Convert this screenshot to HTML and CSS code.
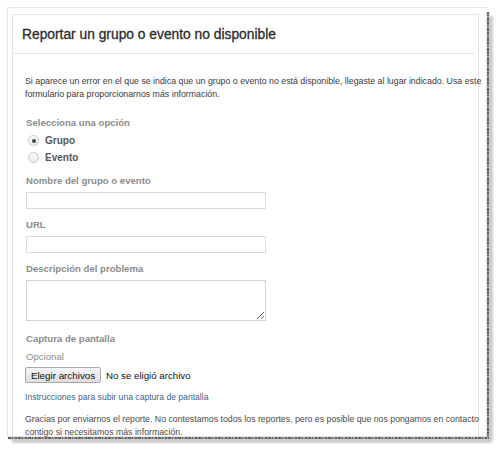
FILE: index.html
```html
<!DOCTYPE html>
<html lang="es">
<head>
<meta charset="utf-8">
<title>Reportar un grupo o evento no disponible</title>
<link rel="stylesheet" href="styles.css">
</head>
<body>
<div class="frame">
  <div class="page">
    <div class="dialog">
      <div class="header">
        <h1 class="title">Reportar un grupo o evento no disponible</h1>
      </div>
      <div class="content">
        <p class="intro">Si aparece un error en el que se indica que un grupo o evento no está disponible, llegaste al lugar indicado. Usa este<br>formulario para proporcionarnos más información.</p>

        <div class="label label-first">Selecciona una opción</div>
        <div class="radio-row"><span class="radio checked"></span><span class="radio-text">Grupo</span></div>
        <div class="radio-row"><span class="radio"></span><span class="radio-text">Evento</span></div>

        <div class="label label-after-radio">Nombre del grupo o evento</div>
        <input class="text-input" type="text">

        <div class="label">URL</div>
        <input class="text-input" type="text">

        <div class="label">Descripción del problema</div>
        <textarea class="text-area"></textarea>

        <div class="label label-after-area">Captura de pantalla</div>
        <div class="label optional">Opcional</div>
        <div class="file-row">
          <button class="file-btn" type="button">Elegir archivos</button>
          <span class="file-status">No se eligió archivo</span>
        </div>

        <a class="help-link" href="#">Instrucciones para subir una captura de pantalla</a>

        <p class="thanks">Gracias por enviarnos el reporte. No contestamos todos los reportes, pero es posible que nos pongamos en contacto<br>contigo si necesitamos más información.</p>
      </div>
    </div>
  </div>
</div>

<svg class="torn" width="500" height="450" viewBox="0 0 500 450" aria-hidden="true">
  <defs>
    <filter id="blur" x="-10%" y="-10%" width="120%" height="120%">
      <feGaussianBlur stdDeviation="1.2"/>
    </filter>
  </defs>
  <g filter="url(#blur)" stroke="#bdbdbd" stroke-width="3" fill="none">
    <line x1="491" y1="16" x2="491" y2="441"/>
    <line x1="12" y1="441" x2="491" y2="441"/>
  </g>
  <line x1="488" y1="12" x2="488" y2="438" stroke="#a0a0a0" stroke-width="2.6"/>
  <line x1="488" y1="12" x2="488" y2="438" stroke="#505050" stroke-width="1.6" stroke-dasharray="2 1 1 2 3 1"/>
  <line x1="8" y1="438" x2="489" y2="438" stroke="#a0a0a0" stroke-width="2.6"/>
  <line x1="8" y1="438" x2="489" y2="438" stroke="#505050" stroke-width="1.6" stroke-dasharray="3 1 1 2 2 1"/>
</svg>
</body>
</html>
```

FILE: styles.css
```css
* { box-sizing: border-box; }

html, body {
  margin: 0;
  padding: 0;
  background: #ffffff;
}

body {
  font-family: "Liberation Sans", Arial, sans-serif;
  width: 500px;
  height: 450px;
  overflow: hidden;
  position: relative;
}

.frame {
  width: 488px;
  height: 437px;
  overflow: hidden;
  background: #ffffff;
}

.page {
  margin: 7px 0 0 7px;
  border-top: 1px solid #e6e6e6;
  border-left: 1px solid #e6e6e6;
  padding: 6px 0 0 4px;
  height: 460px;
}

.dialog {
  width: 467px;
  border: 1px solid #e4e4e4;
  border-bottom: none;
  height: 460px;
}

.header {
  height: 39px;
  border-bottom: 1px solid #e4e4e4;
  margin-right: 4px;
  display: flex;
  align-items: center;
  padding-left: 9px;
}

.title {
  margin: 0;
  font-size: 13.8px;
  font-weight: normal;
  color: #2b2b2b;
  -webkit-text-stroke: 0.3px #2b2b2b;
  white-space: nowrap;
}

.content {
  padding: 21px 0 0 12px;
  width: 470px;
}

.intro {
  margin: 0;
  font-size: 8.8px;
  line-height: 13px;
  color: #3a3a3a;
  white-space: nowrap;
}

.label {
  font-size: 9.6px;
  font-weight: bold;
  color: #8c8c8c;
  line-height: 13px;
  margin-top: 9px;
  margin-bottom: 5px;
  padding-left: 1px;
}

.label-first {
  margin-top: 15px;
  margin-bottom: 3px;
}

.label-after-radio {
  margin-top: 8px;
}

.label-after-area {
  margin-top: 11px;
}

.optional {
  font-weight: normal;
  margin-top: 4px;
  margin-bottom: 4px;
  color: #8c8c8c;
}

.radio-row {
  display: flex;
  align-items: center;
  height: 17px;
  padding-left: 3px;
}

.radio {
  width: 11px;
  height: 11px;
  border-radius: 50%;
  border: 1px solid #c8c8c8;
  background: linear-gradient(#fafafa, #ececec);
  display: flex;
  align-items: center;
  justify-content: center;
  margin-right: 6px;
}

.radio.checked::after {
  content: "";
  width: 4px;
  height: 4px;
  border-radius: 50%;
  background: #444;
}

.radio-text {
  font-size: 10px;
  font-weight: bold;
  color: #555;
}

.text-input {
  display: block;
  width: 240px;
  height: 17px;
  border: 1px solid #dcdcdc;
  background: #ffffff;
  margin: 0 0 0 1px;
  padding: 0;
}

.text-area {
  display: block;
  width: 240px;
  height: 41px;
  border: 1px solid #d2d2d2;
  background: #ffffff;
  margin: 0 0 0 1px;
  padding: 0;
  resize: both;
}

.file-row {
  display: flex;
  align-items: center;
  height: 16px;
}

.file-btn {
  font-family: "Liberation Sans", Arial, sans-serif;
  font-size: 9.8px;
  color: #111;
  height: 16px;
  width: 76px;
  padding: 0;
  border: 1px solid #a9a9a9;
  border-radius: 2px;
  background: linear-gradient(#f6f6f6, #dedede);
}

.file-status {
  font-size: 9.7px;
  color: #111;
  margin-left: 5px;
}

.help-link {
  display: block;
  margin-top: 8px;
  font-size: 8.6px;
  line-height: 13px;
  color: #3b5f8c;
  text-decoration: none;
  white-space: nowrap;
}

.thanks {
  margin: 9px 0 0 0;
  font-size: 8.75px;
  line-height: 13px;
  color: #4a4a4a;
  white-space: nowrap;
}

.torn {
  position: absolute;
  left: 0;
  top: 0;
  pointer-events: none;
}
```
